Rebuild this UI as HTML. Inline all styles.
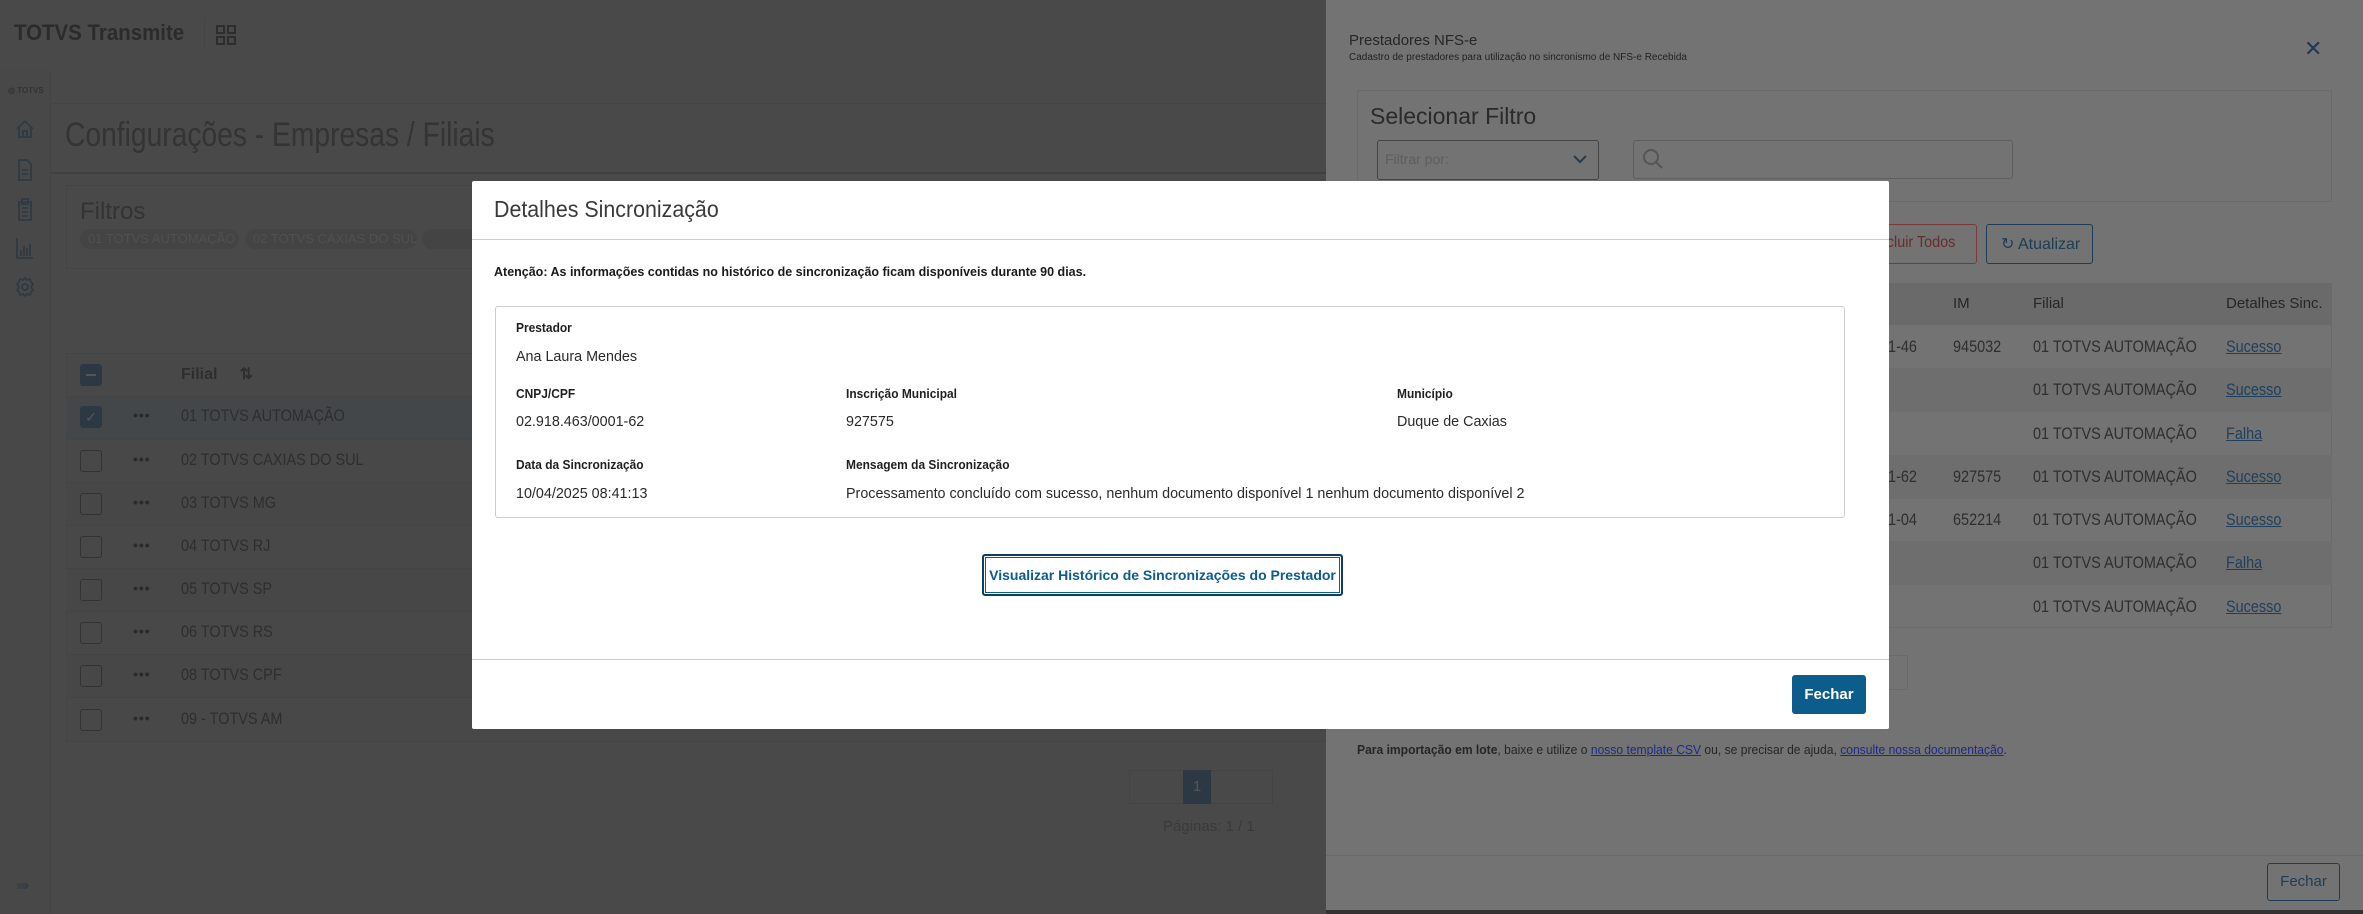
<!DOCTYPE html>
<html><head><meta charset="utf-8"><style>
*{box-sizing:border-box;margin:0;padding:0}
body{width:2363px;height:914px;overflow:hidden;position:relative;background:#494949;font-family:"Liberation Sans",sans-serif;color:#2c2c2c}
.a{position:absolute;white-space:nowrap}
.lt{color:#2f2f2f}
.row{position:absolute;left:66px;width:1260px;height:43px;border-top:1px solid #444}
.cb{position:absolute;left:80px;width:22px;height:22px;border:1px solid #333;border-radius:3px}
.dots{position:absolute;left:133px;font-size:14px;color:#2a2a2a;font-weight:bold;letter-spacing:1px}
.rt{position:absolute;left:181px;font-size:17px;color:#2e2e2e;transform:scaleX(0.85);transform-origin:left}
.dr{position:absolute;left:1357px;width:975px;height:43.5px}
.dr span{position:absolute;top:12px;font-size:17px;color:#2e2e2e;transform:scaleX(0.85);transform-origin:left;white-space:nowrap}
.lnk{color:#1f3f5c !important;text-decoration:underline}
.lab{font-size:13px;font-weight:bold;color:#1f1f1f;transform:scaleX(0.92);transform-origin:left}
.val{font-size:15px;color:#2a2a2a;transform:scaleX(0.955);transform-origin:left}
</style></head><body>
<!-- left app -->
<div class="a" style="left:14px;top:20px;font-size:22px;font-weight:bold;color:#2b2b2b;transform:scaleX(0.93);transform-origin:left">TOTVS Transmite</div>
<div class="a" style="left:204px;top:18px;width:1px;height:32px;background:#444"></div>
<svg class="a" style="left:216px;top:25px" width="20" height="20" viewBox="0 0 20 20" fill="none" stroke="#2d2d2d" stroke-width="2"><rect x="1" y="1" width="7" height="7"/><rect x="12" y="1" width="7" height="7"/><rect x="1" y="12" width="7" height="7"/><rect x="12" y="12" width="7" height="7"/></svg>
<div class="a" style="left:0;top:70px;width:51px;height:844px;border-right:1px solid #444;background:#484848"></div>
<div class="a" style="left:8px;top:86px;font-size:8px;font-weight:bold;color:#333">◎ TOTVS</div>
<svg class="a" style="left:14px;top:118px" width="22" height="180" viewBox="0 0 22 180" fill="none" stroke="#2e3a44" stroke-width="1.8">
<path d="M3 11 L11 3 L19 11 M5 9 V19 H17 V9 M9 19 V13 H13 V19"/>
<path d="M5 42 H13 L17 46 V62 H5 Z M8 52 H14 M8 56 H14"/>
<path d="M5 84 H17 V102 H5 Z M8 81 H14 V86 H8 Z M8 90 H14 M8 94 H14 M8 98 H14"/>
<path d="M3 120 V140 H19 M7 138 V132 M10 138 V128 M13 138 V130 M16 138 V126"/>
<circle cx="11" cy="169" r="3"/><path d="M11 160 L13 162 L16 161 L17 164 L19 166 L17 169 L19 172 L17 174 L16 177 L13 176 L11 178 L9 176 L6 177 L5 174 L3 172 L5 169 L3 166 L5 164 L6 161 L9 162 Z"/>
</svg>
<div class="a" style="left:16px;top:876px;font-size:16px;color:#2e3a44">⇛</div>
<div class="a" style="left:51px;top:103px;width:1280px;height:1px;background:#444"></div>
<div class="a lt" style="left:65px;top:116px;font-size:34px;color:#343434;transform:scaleX(0.83);transform-origin:left">Configurações - Empresas / Filiais</div>
<div class="a" style="left:51px;top:172px;width:1280px;height:2px;background:#404040"></div>
<div class="a" style="left:66px;top:185px;width:1270px;height:84px;border:1px solid #444"></div>
<div class="a" style="left:80px;top:198px;font-size:24px;color:#333">Filtros</div>
<div class="a" style="left:80px;top:229px;width:159px;height:20px;border-radius:10px;background:#444;color:#505050;font-size:13px;padding:2px 8px">01 TOTVS AUTOMAÇÃO</div>
<div class="a" style="left:245px;top:229px;width:172px;height:20px;border-radius:10px;background:#444;color:#505050;font-size:13px;padding:2px 8px">02 TOTVS CAXIAS DO SUL</div>
<div class="a" style="left:422px;top:229px;width:60px;height:20px;border-radius:10px;background:#444"></div>
<div class="a" style="left:66px;top:353px;width:1270px;height:389px;border:1px solid #444;background:#484848"></div>
<div class="a" style="left:80px;top:364px;width:22px;height:22px;background:#2c3945;border-radius:3px"></div>
<div class="a" style="left:86px;top:374px;width:10px;height:2px;background:#555"></div>
<div class="a" style="left:181px;top:364px;font-size:16px;font-weight:bold;color:#2e2e2e">Filial &nbsp;&nbsp;&nbsp; ⇅</div>
<div class="row" style="top:396px;background:#43474a"></div>
<div class="a" style="left:80px;top:406px;width:22px;height:22px;background:#2c3945;border-radius:3px;color:#555;font-size:14px;text-align:center;line-height:22px">✓</div>
<div class="dots" style="top:407px">•••</div><div class="rt" style="top:406px">01 TOTVS AUTOMAÇÃO</div>
<div class="row" style="top:439px"></div><div class="cb" style="top:450px"></div><div class="dots" style="top:451px">•••</div><div class="rt" style="top:450px">02 TOTVS CAXIAS DO SUL</div>
<div class="row" style="top:482px;background:#474747"></div><div class="cb" style="top:493px"></div><div class="dots" style="top:494px">•••</div><div class="rt" style="top:493px">03 TOTVS MG</div>
<div class="row" style="top:525px"></div><div class="cb" style="top:536px"></div><div class="dots" style="top:537px">•••</div><div class="rt" style="top:536px">04 TOTVS RJ</div>
<div class="row" style="top:568px;background:#474747"></div><div class="cb" style="top:579px"></div><div class="dots" style="top:580px">•••</div><div class="rt" style="top:579px">05 TOTVS SP</div>
<div class="row" style="top:611px"></div><div class="cb" style="top:622px"></div><div class="dots" style="top:623px">•••</div><div class="rt" style="top:622px">06 TOTVS RS</div>
<div class="row" style="top:654px;background:#474747"></div><div class="cb" style="top:665px"></div><div class="dots" style="top:666px">•••</div><div class="rt" style="top:665px">08 TOTVS CPF</div>
<div class="row" style="top:697px"></div><div class="cb" style="top:709px"></div><div class="dots" style="top:710px">•••</div><div class="rt" style="top:709px">09 - TOTVS AM</div>
<div class="a" style="left:1129px;top:770px;width:144px;height:34px;border:1px solid #444"></div>
<div class="a" style="left:1183px;top:770px;width:28px;height:34px;background:#2c3945;color:#555;text-align:center;line-height:34px;font-size:15px">1</div>
<div class="a" style="left:1163px;top:818px;font-size:15px;color:#3a3a3a">Páginas: 1 / 1</div>

<!-- drawer -->
<div class="a" style="left:1326px;top:0;width:1037px;height:910px;background:#737373"></div>
<div class="a" style="left:1326px;top:910px;width:1037px;height:4px;background:#333"></div>
<div class="a" style="left:1349px;top:32px;font-size:15px;color:#262626">Prestadores NFS-e</div>
<div class="a" style="left:1349px;top:52px;font-size:10px;color:#222">Cadastro de prestadores para utilização no sincronismo de NFS-e Recebida</div>
<div class="a" style="left:2304px;top:36px;font-size:22px;color:#1c3a55">✕</div>
<div class="a" style="left:1357px;top:90px;width:975px;height:112px;border:1px solid #6a6a6a"></div>
<div class="a" style="left:1370px;top:103px;font-size:23px;color:#2a2a2a">Selecionar Filtro</div>
<div class="a" style="left:1377px;top:140px;width:222px;height:40px;border:1px solid #444;border-radius:3px"></div>
<div class="a" style="left:1385px;top:151px;font-size:14px;color:#5e5e5e">Filtrar por:</div>
<svg class="a" style="left:1572px;top:153px" width="16" height="12" fill="none" stroke="#2a3a48" stroke-width="2"><path d="M2 3 L8 9 L14 3"/></svg>
<div class="a" style="left:1633px;top:140px;width:380px;height:39px;border:1px solid #5e5e5e;border-radius:3px"></div>
<svg class="a" style="left:1642px;top:148px" width="22" height="22" fill="none" stroke="#555" stroke-width="2"><circle cx="9" cy="9" r="7"/><path d="M14 14 L20 20"/></svg>
<div class="a" style="left:1840px;top:224px;width:137px;height:40px;border:1px solid #7a3a3a;border-radius:3px"></div>
<div class="a" style="left:1870px;top:234px;font-size:16px;color:#6a2a2a;transform:scaleX(0.9);transform-origin:left">Excluir Todos</div>
<div class="a" style="left:1986px;top:224px;width:107px;height:40px;border:1px solid #1e3c57;border-radius:3px;color:#1e3c57;font-size:16px;padding:9px 0 0 14px">↻ Atualizar</div>
<div class="a" style="left:1357px;top:283px;width:975px;height:345px;border:1px solid #6a6a6a"></div>
<div class="a" style="left:1357px;top:283px;width:975px;height:42px;background:#6a6a6a"></div>
<div class="a" style="left:1953px;top:295px;font-size:15px;color:#262626">IM</div>
<div class="a" style="left:2033px;top:295px;font-size:15px;color:#262626">Filial</div>
<div class="a" style="left:2226px;top:295px;font-size:15px;color:#262626">Detalhes Sinc.</div>
<div class="dr" style="top:325px"><span style="left:523px">01-46</span><span style="left:596px">945032</span><span style="left:676px">01 TOTVS AUTOMAÇÃO</span><span class="lnk" style="left:869px">Sucesso</span></div>
<div class="dr" style="top:368px;background:#6e6e6e"><span style="left:523px">4</span><span style="left:676px">01 TOTVS AUTOMAÇÃO</span><span class="lnk" style="left:869px">Sucesso</span></div>
<div class="dr" style="top:412px"><span style="left:523px">3</span><span style="left:676px">01 TOTVS AUTOMAÇÃO</span><span class="lnk" style="left:869px">Falha</span></div>
<div class="dr" style="top:455px;background:#6e6e6e"><span style="left:523px">01-62</span><span style="left:596px">927575</span><span style="left:676px">01 TOTVS AUTOMAÇÃO</span><span class="lnk" style="left:869px">Sucesso</span></div>
<div class="dr" style="top:498px"><span style="left:523px">01-04</span><span style="left:596px">652214</span><span style="left:676px">01 TOTVS AUTOMAÇÃO</span><span class="lnk" style="left:869px">Sucesso</span></div>
<div class="dr" style="top:541px;background:#6e6e6e"><span style="left:523px">9</span><span style="left:676px">01 TOTVS AUTOMAÇÃO</span><span class="lnk" style="left:869px">Falha</span></div>
<div class="dr" style="top:585px"><span style="left:523px">3</span><span style="left:676px">01 TOTVS AUTOMAÇÃO</span><span class="lnk" style="left:869px">Sucesso</span></div>
<div class="a" style="left:1880px;top:655px;width:28px;height:35px;border:1px solid #6a6a6a"></div>
<div class="a" style="left:1357px;top:742px;font-size:13px;color:#262626;transform:scaleX(0.93);transform-origin:left"><b>Para importação em lote</b>, baixe e utilize o <u style="color:#1d2a8a">nosso template CSV</u> ou, se precisar de ajuda, <u style="color:#1d2a8a">consulte nossa documentação</u>.</div>
<div class="a" style="left:1326px;top:855px;width:1037px;height:1px;background:#6a6a6a"></div>
<div class="a" style="left:2267px;top:863px;width:73px;height:38px;border:1px solid #1e3c57;border-radius:3px;color:#1e3c57;font-size:15px;text-align:center;line-height:36px">Fechar</div>

<!-- modal -->
<div class="a" style="left:472px;top:181px;width:1417px;height:548px;background:#fff;border-radius:2px"></div>
<div class="a" style="left:494px;top:196px;font-size:23px;color:#3a3a3a;transform:scaleX(0.93);transform-origin:left">Detalhes Sincronização</div>
<div class="a" style="left:472px;top:239px;width:1417px;height:1px;background:#ccc"></div>
<div class="a" style="left:494px;top:265px;font-size:12.5px;font-weight:bold;color:#1a1a1a">Atenção: As informações contidas no histórico de sincronização ficam disponíveis durante 90 dias.</div>
<div class="a" style="left:495px;top:306px;width:1350px;height:212px;border:1px solid #ccc;border-radius:3px"></div>
<div class="a lab" style="left:516px;top:320px">Prestador</div>
<div class="a val" style="left:516px;top:348px">Ana Laura Mendes</div>
<div class="a lab" style="left:516px;top:386px">CNPJ/CPF</div>
<div class="a val" style="left:516px;top:413px">02.918.463/0001-62</div>
<div class="a lab" style="left:846px;top:386px">Inscrição Municipal</div>
<div class="a val" style="left:846px;top:413px">927575</div>
<div class="a lab" style="left:1397px;top:386px">Município</div>
<div class="a val" style="left:1397px;top:413px">Duque de Caxias</div>
<div class="a lab" style="left:516px;top:457px">Data da Sincronização</div>
<div class="a val" style="left:516px;top:485px">10/04/2025 08:41:13</div>
<div class="a lab" style="left:846px;top:457px">Mensagem da Sincronização</div>
<div class="a val" style="left:846px;top:485px">Processamento concluído com sucesso, nenhum documento disponível 1 nenhum documento disponível 2</div>
<div class="a" style="left:982px;top:554px;width:361px;height:42px;border:2px solid #0c3f66;border-radius:3px;box-shadow:0 0 0 1px #fff inset,0 0 0 2px #0c5c8c inset;color:#0c5c8c;font-size:14px;font-weight:bold;text-align:center;line-height:38px">Visualizar Histórico de Sincronizações do Prestador</div>
<div class="a" style="left:472px;top:659px;width:1417px;height:1px;background:#ccc"></div>
<div class="a" style="left:1792px;top:675px;width:74px;height:39px;background:#0c5c8c;border-radius:3px;color:#fff;font-size:15px;font-weight:bold;text-align:center;line-height:39px">Fechar</div>
</body></html>
